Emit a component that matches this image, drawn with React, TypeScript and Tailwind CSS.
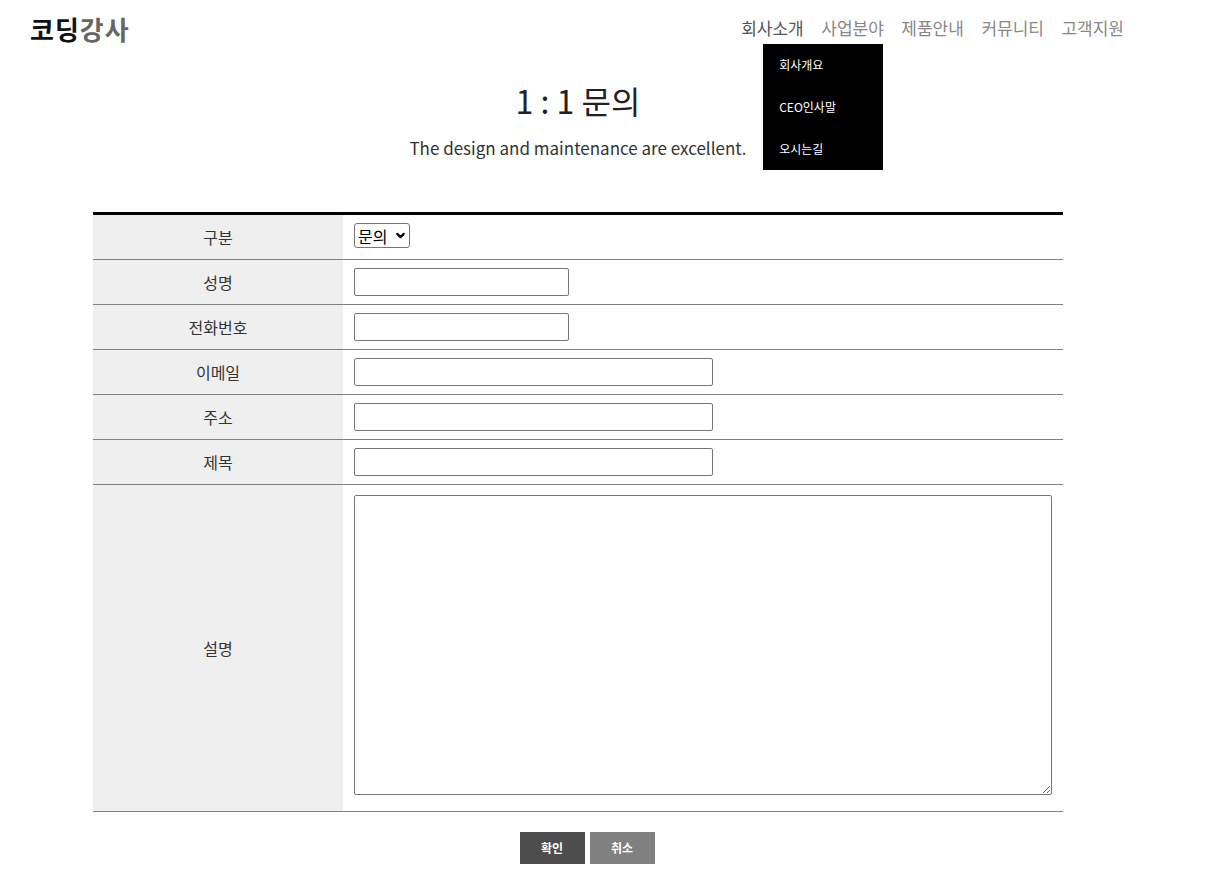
import { ChevronDown } from 'lucide-react'

const FONT = { fontFamily: '"Noto Sans CJK KR", "Noto Sans", sans-serif' }

const NAV = ['회사소개', '사업분야', '제품안내', '커뮤니티', '고객지원']
const SUB = ['회사개요', 'CEO인사말', '오시는길']

function Row({ label, children, tall }: { label: string; children: React.ReactNode; tall?: boolean }) {
  return (
    <div className={'flex border-b border-[#808080] ' + (tall ? 'h-[327px]' : 'h-[45px]')}>
      <div className="flex w-[250px] shrink-0 items-center justify-center bg-[#efefef] text-[16px] text-[#333]">
        {label}
      </div>
      <div className={'flex flex-1 pl-[11px] ' + (tall ? 'items-start pt-[10px]' : 'items-center')}>{children}</div>
    </div>
  )
}

export default function App() {
  return (
    <div className="relative min-h-[894px] bg-white" style={FONT}>
      {/* Header */}
      <header className="flex h-[56px] items-center justify-between pl-[30px] pr-[83px]">
        <h1 className="text-[26px] font-bold tracking-[1px]">
          <span className="text-[#111]">코딩</span>
          <span className="text-[#666]">강사</span>
        </h1>
        <nav className="flex gap-[17.5px] text-[17px] text-[#888]">
          {NAV.map((n, i) => (
            <div key={n} className="relative">
              <span className={i === 0 ? 'text-[#555]' : ''}>{n}</span>
              {i === 0 && (
                <ul className="absolute left-[22px] top-[29px] z-10 flex w-[120px] flex-col bg-black pl-[16px] text-[12px] text-white">
                  {SUB.map((s) => (
                    <li key={s} className="flex h-[42px] items-center">
                      {s}
                    </li>
                  ))}
                </ul>
              )}
            </div>
          ))}
        </nav>
      </header>

      <main className="ml-[93px] w-[970px]">
        <div className="mt-[24px] text-center">
          <h2 className="text-[32px] leading-[40px] text-[#222]">1 : 1 문의</h2>
          <p className="mt-[15px] text-[17px] text-[#333]">The design and maintenance are excellent.</p>
        </div>

        <form className="mt-[51px] border-t-[3px] border-black">
          <Row label="구분">
            <div className="relative mt-[-2px] flex h-[25px] w-[56px] items-center rounded-[3px] border border-[#767676] pl-[3px] text-[16px] text-black">
              문의
              <ChevronDown className="absolute right-[2px] h-[13px] w-[13px]" strokeWidth={4} />
            </div>
          </Row>
          <Row label="성명">
            <input className="h-[28px] w-[215px] rounded-[2px] border border-[#767676]" />
          </Row>
          <Row label="전화번호">
            <input className="h-[28px] w-[215px] rounded-[2px] border border-[#767676]" />
          </Row>
          <Row label="이메일">
            <input className="h-[28px] w-[359px] rounded-[2px] border border-[#767676]" />
          </Row>
          <Row label="주소">
            <input className="h-[28px] w-[359px] rounded-[2px] border border-[#767676]" />
          </Row>
          <Row label="제목">
            <input className="h-[28px] w-[359px] rounded-[2px] border border-[#767676]" />
          </Row>
          <Row label="설명" tall>
            <textarea className="h-[300px] w-[698px] rounded-[2px] border border-[#767676]" />
          </Row>

          <div className="mt-[20px] flex justify-center gap-[5px] pl-[18px]">
            <button type="button" className="h-[32px] w-[65px] bg-[#4d4d4d] text-[12px] font-bold text-white">
              확인
            </button>
            <button type="button" className="h-[32px] w-[65px] bg-[#808080] text-[12px] font-bold text-white">
              취소
            </button>
          </div>
        </form>
      </main>
    </div>
  )
}
